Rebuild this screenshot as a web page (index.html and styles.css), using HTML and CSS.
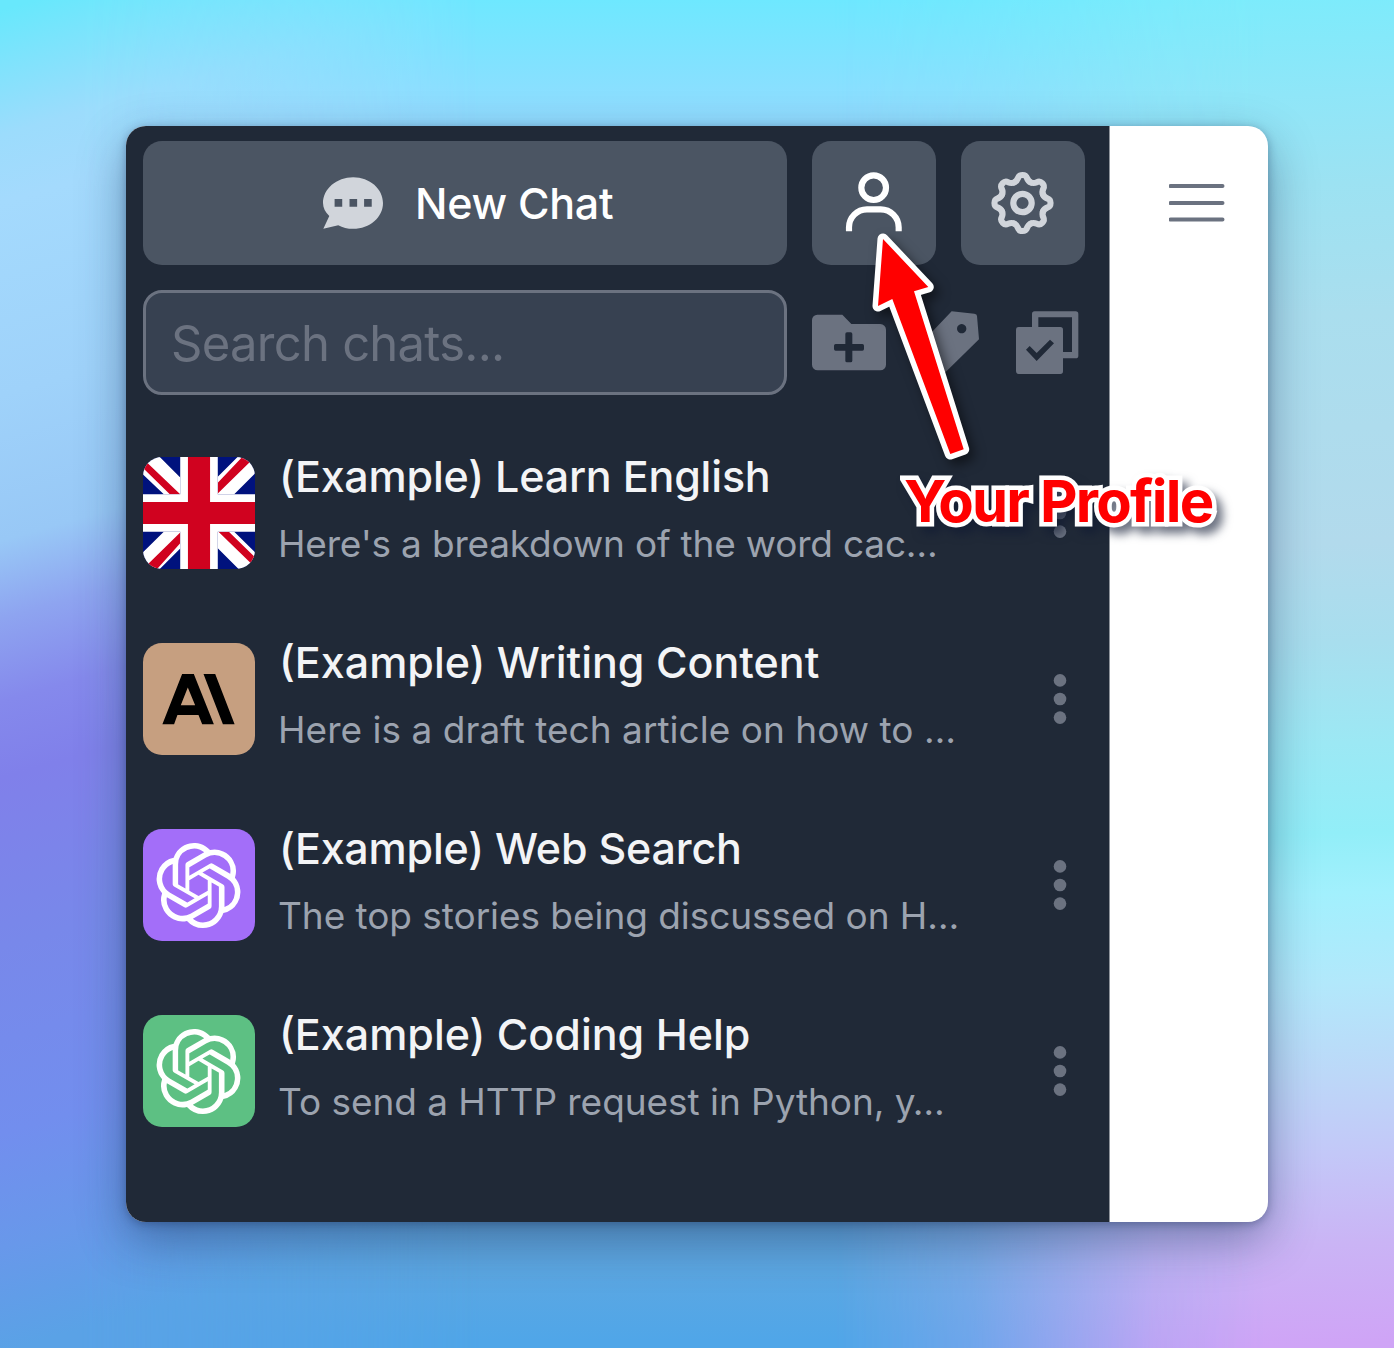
FILE: index.html
```html
<!DOCTYPE html>
<html lang="en">
<head>
<meta charset="utf-8">
<title>Chats</title>
<link rel="stylesheet" href="styles.css">
</head>
<body>
<svg class="defs" width="0" height="0" aria-hidden="true">
  <symbol id="openai" viewBox="0 0 24 24"><path d="M22.2819 9.8211a5.9847 5.9847 0 0 0-.5157-4.9108 6.0462 6.0462 0 0 0-6.5098-2.9A6.0651 6.0651 0 0 0 4.9807 4.1818a5.9847 5.9847 0 0 0-3.9977 2.9 6.0462 6.0462 0 0 0 .7427 7.0966 5.98 5.98 0 0 0 .511 4.9107 6.051 6.051 0 0 0 6.5146 2.9001A5.9847 5.9847 0 0 0 13.2599 24a6.0557 6.0557 0 0 0 5.7718-4.2058 5.9894 5.9894 0 0 0 3.9977-2.9001 6.0557 6.0557 0 0 0-.7475-7.073zm-9.022 12.6081a4.4755 4.4755 0 0 1-2.8764-1.0408l.1419-.0804 4.7783-2.7582a.7948.7948 0 0 0 .3927-.6813v-6.7369l2.02 1.1686a.071.071 0 0 1 .038.0615v5.5826a4.504 4.504 0 0 1-4.4945 4.4944zm-9.6607-4.1254a4.4708 4.4708 0 0 1-.5346-3.0137l.142.0852 4.783 2.7582a.7712.7712 0 0 0 .7806 0l5.8428-3.3685v2.3324a.0804.0804 0 0 1-.0332.0615L9.74 19.9502a4.4992 4.4992 0 0 1-6.1408-1.6464zM2.3408 7.8956a4.485 4.485 0 0 1 2.3655-1.9728V11.6a.7664.7664 0 0 0 .3879.6765l5.8144 3.3543-2.0201 1.1685a.0757.0757 0 0 1-.071 0l-4.8303-2.7865A4.504 4.504 0 0 1 2.3408 7.872zm16.5963 3.8558L13.1038 8.364 15.1192 7.2a.0757.0757 0 0 1 .071 0l4.8303 2.7913a4.4944 4.4944 0 0 1-.6765 8.1042v-5.6772a.79.79 0 0 0-.407-.667zm2.0107-3.0231l-.142-.0852-4.7735-2.7818a.7759.7759 0 0 0-.7854 0L9.409 9.2297V6.8974a.0662.0662 0 0 1 .0284-.0615l4.8303-2.7866a4.4992 4.4992 0 0 1 6.6802 4.66zM8.3065 12.863l-2.02-1.1638a.0804.0804 0 0 1-.038-.0567V6.0742a4.4992 4.4992 0 0 1 7.3757-3.4537l-.142.0805L8.704 5.459a.7948.7948 0 0 0-.3927.6813zm1.0976-2.3654l2.602-1.4998 2.6069 1.4998v2.9994l-2.5974 1.4997-2.6067-1.4997Z"/></symbol>
  <symbol id="dots" viewBox="0 0 14 50"><circle cx="7" cy="6.4" r="6.3"/><circle cx="7" cy="25" r="6.3"/><circle cx="7" cy="43.6" r="6.3"/></symbol>
  <path id="tooth" d="M-8.5-20.5C-2.5-23-6.5-28 0-28S2.5-23 8.5-20.5"/>
</svg>
<main class="window">
  <aside class="sidebar">
    <div class="actions">
      <button class="btn new-chat">
        <svg class="bubble" width="60" height="52" viewBox="69 141 181 156"><path fill="#d1d5db" fill-rule="evenodd" d="M160 141c50 0 90 35 90 78s-40 78-90 78c-17 0-32-4-45-11l-45 11 18-39c-12-11-19-24-19-39 0-43 41-78 91-78zM104 207v23h23v-23zm45 0v23h23v-23zm44 0v23h23v-23z"/></svg>
        <span class="new-label">New Chat</span>
      </button>
      <button class="btn square" aria-label="Profile">
        <svg width="124" height="124" viewBox="36 32 372 372" fill="none" stroke="#fff" stroke-width="18.5"><circle cx="221" cy="172" r="37"/><path d="M147 303V291a54 54 0 0 1 54-54H242a54 54 0 0 1 54 54V303"/></svg>
      </button>
      <button class="btn square" aria-label="Settings">
        <svg width="124" height="124" viewBox="-61.5 -62 124 124" fill="none" stroke="#d1d5db" stroke-width="6.2" stroke-linecap="round"><circle r="9.2"/><use href="#tooth"/><use href="#tooth" transform="rotate(45)"/><use href="#tooth" transform="rotate(90)"/><use href="#tooth" transform="rotate(135)"/><use href="#tooth" transform="rotate(180)"/><use href="#tooth" transform="rotate(225)"/><use href="#tooth" transform="rotate(270)"/><use href="#tooth" transform="rotate(315)"/></svg>
      </button>
    </div>
    <div class="tools">
      <div class="search">Search chats...</div>
      <svg class="tool-icons" width="267" height="64" viewBox="36 92 801 192" fill="#6b7280">
        <path fill-rule="evenodd" d="M52 103H127L154 131H241a17 17 0 0 1 17 17V253a17 17 0 0 1-17 17H53a17 17 0 0 1-17-17V119a16 16 0 0 1 16-16zM141 156q-5 0-5 5V191H107q-5 0-5 5V206q0 5 5 5H136V241q0 5 5 5H152q5 0 5-5V211H187q5 0 5-5V196q0-5-5-5H157V161q0-5-5-5z"/>
        <path fill-rule="evenodd" d="M455 93L523 100Q531 101 531 107L537 177L437 275Q429 282 420 275L355 214Q349 206 355 198zM485 131a14 14 0 1 0 .1 0z"/>
        <path fill-rule="evenodd" d="M704 93H827a8 8 0 0 1 8 8V226a8 8 0 0 1-8 8H789V215H816V111H715V140H781a8 8 0 0 1 8 8V273a8 8 0 0 1-8 8H656a8 8 0 0 1-8-8V148a8 8 0 0 1 8-8H696V101a8 8 0 0 1 8-8zM678 208L710 242L762 189L750 178L710 218L689 197z"/>
      </svg>
    </div>
    <div class="chats">
      <div class="chat">
        <div class="avatar">
          <svg width="112" height="112" viewBox="38 51 334 334"><path fill="#00127d" d="M38 51h334v334H38z"/><path fill="#fff" d="M38 51H88L149 112V162H100L38 103zM320 51H372V100L310 162H261V110zM38 335V385H88L149 324V274H100zM261 274H310L372 335V385H323L261 323z"/><path fill="#d0021f" d="M38 56L149 162H118L38 84zM334 51H372L261 160V128zM54 385H80L149 308V276L38 385zM263 274H294L372 350V380z"/><path fill="#fff" d="M149 51H261V385H149zM38 162H372V274H38z"/><path fill="#d0021f" d="M172 51H238V385H172zM38 185H372V251H38z"/></svg>
        </div>
        <div class="info"><div class="title tight">(Example) Learn English</div><div class="preview tight">Here's a breakdown of the word cac…</div></div>
        <svg class="menu" width="14" height="50"><use href="#dots"/></svg>
      </div>
      <div class="chat">
        <div class="avatar claude">
          <svg width="112" height="112" viewBox="38 39 335 335"><path fill-rule="evenodd" d="M155 132H190L250 282H215L204 254H141L131 282H96zM172 172L151 225H194zM219 132H254L312 282H277z"/></svg>
        </div>
        <div class="info"><div class="title">(Example) Writing Content</div><div class="preview wide">Here is a draft tech article on how to …</div></div>
        <svg class="menu" width="14" height="50"><use href="#dots"/></svg>
      </div>
      <div class="chat">
        <div class="avatar gpt4"><svg width="85" height="85"><use href="#openai"/></svg></div>
        <div class="info"><div class="title tight">(Example) Web Search</div><div class="preview">The top stories being discussed on H…</div></div>
        <svg class="menu" width="14" height="50"><use href="#dots"/></svg>
      </div>
      <div class="chat">
        <div class="avatar gpt3"><svg width="85" height="85"><use href="#openai"/></svg></div>
        <div class="info"><div class="title">(Example) Coding Help</div><div class="preview">To send a HTTP request in Python, y…</div></div>
        <svg class="menu" width="14" height="50"><use href="#dots"/></svg>
      </div>
    </div>
  </aside>
  <section class="content">
    <svg width="56" height="40" viewBox="0 0 56 40" stroke="#6b7280" stroke-width="4" stroke-linecap="round"><path d="M1.5 3H53.5M1.5 20H53.5M1.5 36.5H53.5"/></svg>
  </section>
</main>
<svg class="arrow" width="140" height="260" viewBox="850 220 140 260"><path d="M883 239L928.3 287L914 291.3L963.7 449.3L950.3 454L892.3 299L878 306z" fill="#fff" stroke="#fff" stroke-width="11" stroke-linejoin="round"/><path d="M883 239L928.3 287L914 291.3L963.7 449.3L950.3 454L892.3 299L878 306z" fill="#f00"/></svg>
<div class="callout">Your Profile</div>
</body>
</html>
```
FILE: styles.css
```css
* { box-sizing: border-box; }
body {
  margin: 0;
  width: 1394px;
  height: 1348px;
  overflow: hidden;
  position: relative;
  padding: 126px;
  font-family: Inter, "Liberation Sans", sans-serif;
  background: linear-gradient(180deg, #6ee8ff 0, #94dcff 126px, #9bd6fd 400px, #68a8dc 1200px, #50a6e8 1340px);
}
/* side washes of the wallpaper */
body::before,
body::after {
  content: "";
  position: absolute;
  top: 0;
  height: 1348px;
  z-index: -1;
}
body::before {
  left: 0;
  width: 500px;
  background: linear-gradient(164deg, #68e8fc 10px, #9cdcfc 130px, #a4dafd 195px, #9fd2fa 380px, #98c8f6 520px, #8ea4f0 595px, #8589ec 675px, #8080ea 748px, #7888ea 910px, #728eee 1090px, #6898ea 1200px, #5aa2e6 1300px);
  -webkit-mask-image: linear-gradient(90deg, #000 80px, transparent 480px);
}
body::after {
  right: 0;
  width: 560px;
  background: linear-gradient(178deg, #7aecfc 0, #8fe6f8 110px, #9ce2f2 200px, #aadeee 330px, #b2daec 560px, #a8deee 660px, #9ce8f4 760px, #92eef8 850px, #a2f0fd 910px, #b2e8fb 1000px, #bcd8f8 1090px, #c3c8f8 1170px, #cab4f5 1260px, #cfa4f6 1360px);
  -webkit-mask-image: linear-gradient(90deg, transparent 0, rgba(0,0,0,.25) 140px, rgba(0,0,0,.85) 320px, #000 430px);
}
.defs { position: absolute; }
.window {
  display: flex;
  width: 1142px;
  height: 1096px;
  border-radius: 20px;
  overflow: hidden;
  background: #fff;
  box-shadow: 0 18px 48px rgba(20,40,80,.42), 0 2px 10px rgba(20,40,80,.35);
}
.sidebar {
  width: 984px;
  padding: 15px 24px 0 17px;
  background: #202937;
  border-right: 1px solid #8f949b;
}
.content { flex: 1; padding: 57px 0 0 59px; }
.content svg { display: block; }
.actions { display: flex; gap: 25px; }
.btn {
  border: 0;
  padding: 0;
  height: 124px;
  border-radius: 19px;
  background: #4b5563;
  font: inherit;
  display: flex;
  align-items: center;
  flex: none;
}
.new-chat { width: 644px; padding-left: 180px; gap: 32px; color: #fff; }
.new-label { font-size: 43px; font-weight: 500; letter-spacing: -.3px; white-space: nowrap; }
.square { width: 124px; }
.tools { display: flex; align-items: flex-start; gap: 25px; margin-top: 25px; }
.search {
  width: 644px;
  height: 105px;
  border: 3px solid #6b7280;
  border-radius: 19px;
  background: #374151;
  color: #6b7280;
  font-size: 49px;
  line-height: 101px;
  letter-spacing: -.75px;
  padding-left: 25px;
  white-space: nowrap;
}
.tool-icons { margin-top: 21px; }
.chats { display: flex; flex-direction: column; gap: 74px; margin-top: 62px; }
.chat { display: flex; align-items: center; height: 112px; }
.avatar {
  width: 112px;
  height: 112px;
  border-radius: 19px;
  overflow: hidden;
  display: flex;
  align-items: center;
  justify-content: center;
  flex: none;
}
.claude { background: #c69f80; }
.gpt4 { background: #a36ef9; fill: #fff; }
.gpt3 { background: #5dc083; fill: #fff; }
.gpt4 svg, .gpt3 svg { margin-right: 2px; }
.info { width: 798px; padding-left: 24px; white-space: nowrap; align-self: flex-start; }
.title { font-size: 43px; font-weight: 500; line-height: 54px; margin-top: -8px; color: #f3f4f6; }
.title.tight { letter-spacing: -.2px; }
.preview { font-size: 37px; line-height: 46px; margin: 18px 0 0 -1px; color: #9ca3af; letter-spacing: -.05px; }
.preview.tight { letter-spacing: -.19px; }
.preview.wide { letter-spacing: .03px; }
.menu { fill: #6b7280; flex: none; }
.arrow {
  position: absolute;
  left: 850px;
  top: 220px;
  filter: drop-shadow(5px 6px 6px rgba(0,0,0,.5));
}
.callout {
  position: absolute;
  left: 904px;
  top: 466px;
  font-size: 58px;
  font-weight: 700;
  line-height: 70px;
  letter-spacing: -1.8px;
  white-space: nowrap;
  color: #f00;
  -webkit-text-stroke: 9px #fff;
  paint-order: stroke fill;
  filter: drop-shadow(6px 7px 5px rgba(15,25,50,.6));
}
```
